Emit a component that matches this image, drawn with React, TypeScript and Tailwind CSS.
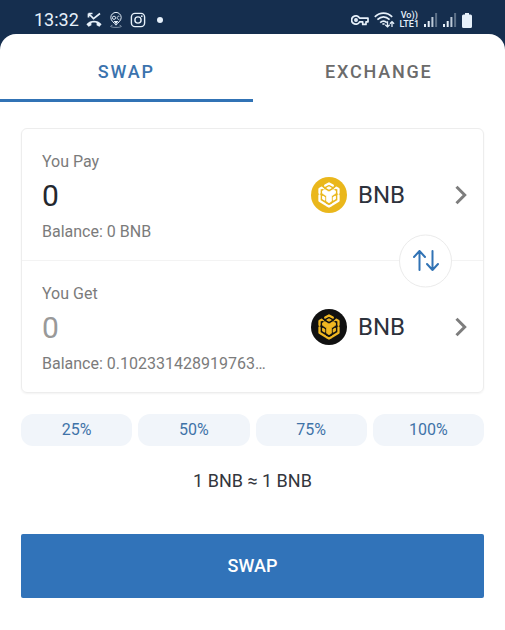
import { useState } from "react";

function BnbMark({ className }: { className: string }) {
  return (
    <svg viewBox="0 0 24 26" className={className} fill="none" stroke="currentColor" strokeLinejoin="round" aria-hidden="true">
      <path d="M8.2 3.6 12 1.500l3.800 2.100M4.600 5.700 2.500 6.900V11M19.400 5.700l2.100 1.200V11M2.500 13.400v5.400L8.200 22.200M21.500 13.400v5.400L15.800 22.200M9.600 23.200 12 24.500l2.400-1.300" strokeWidth="2.300" strokeLinecap="round" />
      <path d="M12 4.700 14.300 6 12 7.300 9.700 6Z" fill="currentColor" strokeWidth="0.800" />
      <path d="M7.800 7.600 12 10l4.200-2.400 2.300 1.300v2.400L14.400 14v5.200L12 20.700 9.600 19.200V14L5.500 11.300V8.900Z" fill="currentColor" strokeWidth="0.800" />
      <path d="M5.700 14.300 7.700 15.500V18L5.700 16.800ZM18.300 14.300 16.300 15.500V18L18.300 16.800Z" strokeWidth="1.200" fill="currentColor" />
      <path d="M4.600 5.700 7 7M19.400 5.700 17 7" strokeWidth="1.400" />
    </svg>
  );
}

function Signal() {
  return (
    <svg viewBox="0 0 14 14" className="h-3.5 w-3.5" fill="currentColor" aria-hidden="true">
      <rect x="0" y="11" width="2" height="3" />
      <rect x="3.7" y="8" width="2" height="6" />
      <rect x="7.4" y="4" width="2" height="10" opacity="0.8" />
      <rect x="11.1" y="0" width="2" height="14" opacity="0.35" />
    </svg>
  );
}

function StatusBar() {
  return (
    <div className="flex items-center justify-between pt-2 pr-[33px] pb-1 pl-[34px] text-[#e6f0fa]">
      <div className="flex items-center gap-[7px]">
        <span className="text-lg leading-6">13:32</span>
        <svg viewBox="0 0 16 16" className="h-4 w-4" aria-hidden="true">
          <path d="M2.5 1.5v4M2.5 1.5h4M2.5 1.5l5 5.2 6.5-5.2" fill="none" stroke="currentColor" strokeWidth="1.7" />
          <path d="M0.4 12.2C4.6 7.6 11.4 7.6 15.6 12.2L13.4 14.8 10.6 13.2V11C8.9 10.4 7.1 10.4 5.4 11v2.2L2.6 14.8Z" fill="currentColor" />
        </svg>
        <svg viewBox="0 0 14 16" className="h-4 w-3.5" fill="none" stroke="currentColor" aria-hidden="true">
          <path d="M7 13.2C5.3 10.9 1.8 8.8 1.8 5.6a5.2 5.2 0 0 1 10.4 0C12.2 8.8 8.7 10.9 7 13.2Z" strokeWidth="1" />
          <circle cx="5" cy="5.8" r="1.6" strokeWidth="0.9" />
          <path d="M10.3 4.3a1.6 1.6 0 1 0 0 3" strokeWidth="0.9" />
          <path d="M4.6 9h4.8L7 12.2Z" fill="currentColor" stroke="none" />
          <path d="M3.5 13.2c-4 1.2-1 2.2 3.5 2.2s7.5-1 3.5-2.2" strokeWidth="0.7" opacity="0.7" />
        </svg>
        <svg viewBox="0 0 16 16" className="h-4 w-4" fill="none" stroke="currentColor" strokeWidth="1.4" aria-hidden="true">
          <rect x="1.4" y="1.4" width="13.2" height="13.2" rx="3.6" />
          <circle cx="8" cy="8" r="3.1" />
          <circle cx="11.8" cy="4.2" r="0.9" fill="currentColor" stroke="none" />
        </svg>
        <span className="ml-1 h-1.5 w-1.5 rounded-full bg-current" />
      </div>
      <div className="flex items-center gap-[5px]">
        <svg viewBox="0 0 18 12" className="h-3 w-[18px]" fill="none" stroke="currentColor" strokeWidth="1.7" strokeLinejoin="round" aria-hidden="true">
          <path d="M8.6 4.2A4.2 4.2 0 1 0 8.6 7.8H11.7V10.4H15V7.8H17V4.2Z" />
          <circle cx="5" cy="6" r="1.1" />
        </svg>
        <svg viewBox="0 0 21 16" className="h-4 w-[21px]" fill="none" stroke="currentColor" strokeWidth="1.7" aria-hidden="true">
          <path d="M0.8 4.8C6 0 13 0 18.2 4.8M3.4 7.7C7.2 4.2 11.8 4.2 15.6 7.7M6.2 10.6C8.3 8.6 10.7 8.6 12.8 10.6" />
          <path d="M9.5 11.2v1.6" strokeWidth="2.2" />
          <path d="M13.5 9.3v5.4M11.3 12.7l2.2 2.2 2.2-2.2M18 15V9.8M15.9 11.8l2.1-2.2 2.1 2.2" strokeWidth="1.3" />
        </svg>
        <div className="flex flex-col items-center text-[9px] leading-[9px] font-medium">
          <span>Vo))</span>
          <span>LTE1</span>
        </div>
        <Signal />
        <Signal />
        <svg viewBox="0 0 10 15" className="h-[15px] w-2.5" fill="currentColor" aria-hidden="true">
          <path d="M3 0h4v1.5h1.5A1.5 1.5 0 0 1 10 3v10.5A1.5 1.5 0 0 1 8.5 15h-7A1.5 1.5 0 0 1 0 13.5V3A1.5 1.5 0 0 1 1.5 1.5H3Z" />
        </svg>
      </div>
    </div>
  );
}

type SideProps = {
  id: string;
  label: string;
  balance: string;
  amountClass: string;
  badgeClass: string;
  readOnly?: boolean;
  value: string;
  onChange?: (v: string) => void;
};

function SwapSide({ id, label, balance, amountClass, badgeClass, readOnly, value, onChange }: SideProps) {
  return (
    <div className="flex items-center justify-between pt-[21px] pr-4 pb-4 pl-5">
      <div className="flex w-[230px] flex-col">
        <label htmlFor={id} className="text-base leading-6 text-[#7b7b7b]">{label}</label>
        <input
          id={id}
          value={value}
          readOnly={readOnly}
          onChange={(e) => onChange?.(e.target.value)}
          className={`mb-1 h-[42px] w-full bg-transparent text-3xl outline-none ${amountClass}`}
        />
        <p className="text-base leading-6 whitespace-nowrap text-[#7b7b7b]">{balance}</p>
      </div>
      <button type="button" className="flex items-center pb-1 text-[#2d323c]">
        <span className={`flex h-9 w-9 items-center justify-center rounded-full ${badgeClass}`}>
          <BnbMark className="h-[26px] w-6" />
        </span>
        <span className="ml-[11px] text-2xl">BNB</span>
        <svg viewBox="0 0 12 20" className="ml-[50px] h-5 w-3 text-[#7d7d7d]" fill="none" stroke="currentColor" strokeWidth="3" aria-hidden="true">
          <path d="M1.5 1.8 9.7 10l-8.2 8.2" />
        </svg>
      </button>
    </div>
  );
}

export default function App() {
  const [amount, setAmount] = useState("0");

  return (
    <div className="flex min-h-screen flex-col bg-[#152e4e] font-[Roboto,sans-serif]">
      <StatusBar />
      <main className="-mt-0.5 flex-1 rounded-t-2xl bg-white">
        <nav className="grid grid-cols-2 text-lg font-medium tracking-widest">
          <button type="button" className="h-[68px] border-b-3 border-[#3173b5] pt-2.5 text-[#3b73ae]">SWAP</button>
          <button type="button" className="h-[68px] border-b-3 border-transparent pt-2.5 text-[#6b6b6b]">EXCHANGE</button>
        </nav>

        <div className="px-[21px] pt-[26px]">
          <section className="relative rounded-md border border-[#ededed] shadow-xs">
            <SwapSide
              id="pay"
              label="You Pay"
              balance="Balance: 0 BNB"
              amountClass="text-[#24272e]"
              badgeClass="bg-[#eab71c] text-white"
              value={amount}
              onChange={setAmount}
            />
            <hr className="border-[#f3f3f3]" />
            <SwapSide
              id="get"
              label="You Get"
              balance="Balance: 0.102331428919763…"
              amountClass="text-[#999999]"
              badgeClass="bg-[#111111] text-[#f0b722]"
              value="0"
              readOnly
            />
            <button
              type="button"
              aria-label="Switch direction"
              className="absolute top-1/2 right-[31px] flex h-[53px] w-[53px] -translate-y-1/2 items-center justify-center rounded-full border border-[#ebebeb] bg-white text-[#3173b5]"
            >
              <svg viewBox="0 0 26 22" className="h-[22px] w-[26px]" fill="none" stroke="currentColor" strokeWidth="2" strokeLinecap="round" strokeLinejoin="round" aria-hidden="true">
                <path d="M6.5 20.5V1.5M1 7.5l5.5-6 5.5 6M19.5 1.5v19M14 14.5l5.5 6 5.5-6" />
              </svg>
            </button>
          </section>

          <div className="mt-[21px] grid grid-cols-4 gap-1.5">
            {["25%", "50%", "75%", "100%"].map((p) => (
              <button key={p} type="button" className="h-8 rounded-xl bg-[#f1f5fa] text-base text-[#3f73a8]">
                {p}
              </button>
            ))}
          </div>

          <p className="mt-[21px] text-center text-lg text-[#33363d]">1 BNB ≈ 1 BNB</p>

          <div className="pt-[39px] pb-8">
            <button type="button" className="h-16 w-full rounded-xs bg-[#3173b9] text-lg font-medium text-white">
              SWAP
            </button>
          </div>
        </div>
      </main>
    </div>
  );
}
